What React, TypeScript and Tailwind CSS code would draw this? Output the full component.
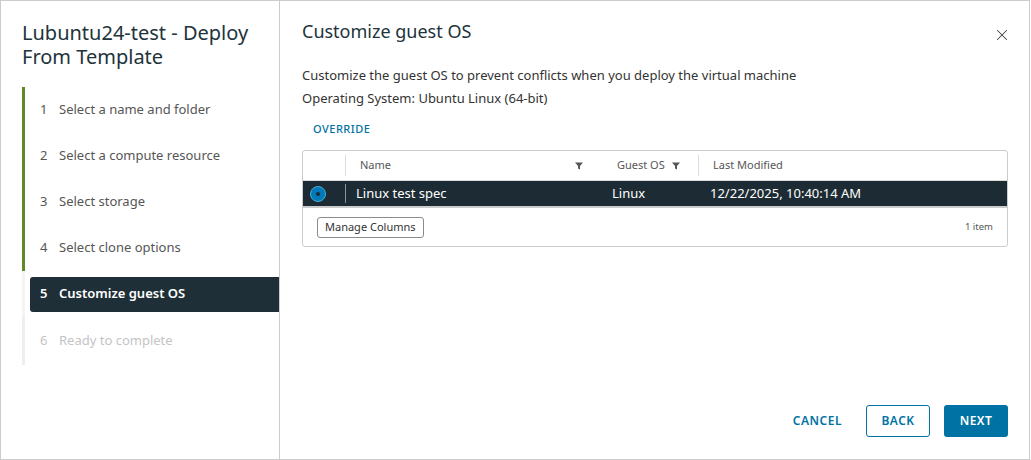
import { X } from 'lucide-react';

const steps = [
  { n: 1, label: 'Select a name and folder', state: 'done' },
  { n: 2, label: 'Select a compute resource', state: 'done' },
  { n: 3, label: 'Select storage', state: 'done' },
  { n: 4, label: 'Select clone options', state: 'done' },
  { n: 5, label: 'Customize guest OS', state: 'active' },
  { n: 6, label: 'Ready to complete', state: 'todo' },
];

function FilterIcon() {
  return (
    <svg width="8" height="8" viewBox="0 0 8 8" className="text-[#565656]">
      <path d="M0 0.5h8L5 4v3.5L3 6.5V4z" fill="currentColor" />
    </svg>
  );
}

export default function App() {
  return (
    <div
      className="w-[1030px] h-[460px] flex bg-white border border-[#cccccc] text-[#333333]"
      style={{ fontFamily: '"Noto Sans", sans-serif' }}
    >
      {/* Wizard steps */}
      <aside className="w-[279px] shrink-0 border-r border-[#cccccc] flex flex-col">
        <h1 className="pl-[21px] pr-4 pt-[20px] text-[20px] leading-[24px] text-[#21333b]">
          Lubuntu24-test - Deploy From Template
        </h1>
        <nav className="mt-[18px] ml-[21px]">
          {steps.map((s) => (
            <div
              key={s.n}
              className={`border-l-[3px] flex items-center ${
                s.state === 'todo'
                  ? 'border-[#eeeeee] h-[48px]'
                  : s.state === 'active'
                  ? 'border-[#f4f4f4] h-[46px]'
                  : 'border-[#5e8a22] h-[46px]'
              }`}
            >
              <div
                className={`flex items-center w-full ml-[5px] h-[35px] rounded-l-[3px] text-[13px] ${
                  s.state === 'active'
                    ? 'bg-[#1f2f37] text-white font-semibold'
                    : s.state === 'todo'
                    ? 'text-[#c4c4c4]'
                    : 'text-[#565656]'
                }`}
              >
                <span className="w-[29px] pl-[10px]">{s.n}</span>
                <span>{s.label}</span>
              </div>
            </div>
          ))}
        </nav>
      </aside>

      {/* Content */}
      <main className="flex-1 flex flex-col pl-[22px] pr-[21px]">
        <div className="flex items-start justify-between pt-[18px]">
          <h2 className="text-[18px] leading-[24px] text-[#21333b]">Customize guest OS</h2>
          <button className="mt-[7px] -mr-[3px] text-[#454545]">
            <X size={18} strokeWidth={1.4} />
          </button>
        </div>

        <p className="mt-[20px] text-[13px] leading-[23px]">
          Customize the guest OS to prevent conflicts when you deploy the virtual machine
        </p>
        <p className="text-[13px] leading-[23px]">Operating System: Ubuntu Linux (64-bit)</p>

        <div className="mt-[5px] pl-[11px]">
          <button className="text-[11px] font-medium tracking-[0.5px] text-[#0072a3] leading-[16px]">
            OVERRIDE
          </button>
        </div>

        {/* Table */}
        <div className="mt-[11px] border border-[#cccccc] rounded-[3px] overflow-hidden">
          <div className="flex items-center h-[30px] text-[11px] text-[#565656] border-b border-[#dddddd]">
            <div className="w-[43px] h-[21px] border-r border-[#dddddd]" />
            <div className="flex items-center justify-between w-[271px] pl-[14px] pr-[34px]">
              <span>Name</span>
              <FilterIcon />
            </div>
            <div className="flex items-center justify-between w-[82px] pl-0 pr-[18px] h-[21px] border-r border-[#dddddd]">
              <span>Guest OS</span>
              <FilterIcon />
            </div>
            <div className="pl-[14px]">Last Modified</div>
          </div>
          <div className="flex items-center h-[25px] bg-[#1d2c34] text-white text-[13px]">
            <div className="w-[43px] h-[19px] flex items-center pl-[7px] border-r border-[#8a959b]">
              <span className="w-[16px] h-[16px] rounded-full bg-[#0079b8] border-[1.5px] border-[#49afd9] flex items-center justify-center">
                <span className="w-[4px] h-[4px] rounded-full bg-[#1d2c34]" />
              </span>
            </div>
            <div className="w-[265px] pl-[10px]">Linux test spec</div>
            <div className="w-[85px] pl-[1px]">Linux</div>
            <div className="pl-[14px]">12/22/2025, 10:40:14 AM</div>
          </div>
          <div className="h-[2px] bg-[#cccccc]" />
          <div className="flex items-center justify-between h-[38px] pl-[14px] pr-[14px]">
            <button className="h-[21px] px-[7px] border border-[#8c8c8c] rounded-[3px] text-[11px] text-[#333333] leading-[18px]">
              Manage Columns
            </button>
            <span className="text-[9.5px] text-[#565656]">1 item</span>
          </div>
        </div>

        <div className="flex-1" />

        <div className="flex items-center justify-end pb-[22px]">
          <button className="h-[32px] px-[10px] text-[12px] font-semibold tracking-[0.5px] text-[#0072a3]">
            CANCEL
          </button>
          <button className="ml-[14px] h-[32px] w-[64px] border border-[#0072a3] rounded-[3px] text-[12px] font-semibold tracking-[0.5px] text-[#0072a3]">
            BACK
          </button>
          <button className="ml-[14px] h-[32px] w-[64px] bg-[#0072a3] rounded-[3px] text-[12px] font-semibold tracking-[0.5px] text-white">
            NEXT
          </button>
        </div>
      </main>
    </div>
  );
}
